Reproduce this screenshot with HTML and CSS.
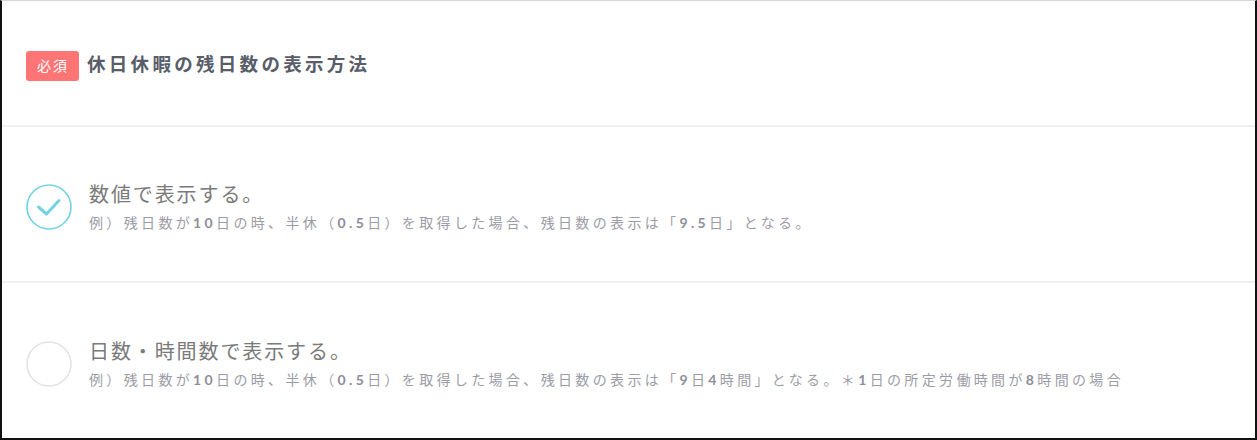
FILE: index.html
```html
<!DOCTYPE html>
<html lang="ja">
<head>
    <meta charset="UTF-8">
    <meta name="viewport" content="width=device-width, initial-scale=1.0">
    <title>休日休暇の残日数の表示方法</title>
    <link rel="stylesheet" href="styles.css">
</head>
<body>
    <div class="panel">
        <div class="panel-head">
            <span class="badge">必須</span>
            <h1 class="title">休日休暇の残日数の表示方法</h1>
        </div>
        <div class="option">
            <span class="radio checked">
                <svg width="46" height="46" viewBox="0 0 46 46">
                    <circle cx="23" cy="23" r="22" fill="none" stroke="#72d3e4" stroke-width="1.6"/>
                    <polyline points="12.5,23 20.5,30 33,16.5" fill="none" stroke="#72d3e4" stroke-width="3" stroke-linecap="round" stroke-linejoin="round"/>
                </svg>
            </span>
            <div class="option-text">
                <div class="option-label">数値で表示する。</div>
                <div class="option-note">例）残日数が<b>10</b>日の時、半休（<b>0.5</b>日）を取得した場合、残日数の表示は「<b>9.5</b>日」となる。</div>
            </div>
        </div>
        <div class="option">
            <span class="radio">
                <svg width="46" height="46" viewBox="0 0 46 46">
                    <circle cx="23" cy="23" r="22" fill="none" stroke="#e3e3e6" stroke-width="1.6"/>
                </svg>
            </span>
            <div class="option-text">
                <div class="option-label">日数・時間数で表示する。</div>
                <div class="option-note">例）残日数が<b>10</b>日の時、半休（<b>0.5</b>日）を取得した場合、残日数の表示は「<b>9</b>日<b>4</b>時間」となる。＊<b>1</b>日の所定労働時間が<b>8</b>時間の場合</div>
            </div>
        </div>
    </div>
</body>
</html>
```

FILE: styles.css
```css
body {
    margin: 0;
    font-family: Lato, "Noto Sans CJK JP", sans-serif;
    background: #fff;
}
.panel {
    box-sizing: border-box;
    width: 1257px;
    height: 440px;
    border-top: 1px solid #d6d6d6;
    border-left: 2px solid #111;
    border-right: 2px solid #111;
    border-bottom: 2px solid #111;
    background: #fff;
}
.panel-head {
    box-sizing: border-box;
    height: 126px;
    display: flex;
    align-items: center;
    padding: 0 0 0 24px;
    border-bottom: 2px solid #efefef;
}
.badge {
    background: #ff7474;
    color: #fff;
    font-size: 14px;
    letter-spacing: 2px;
    line-height: 30px;
    height: 30px;
    padding: 0 10px 0 11px;
    border-radius: 3px;
    margin-top: 6px;
}
.title {
    margin: 0 0 0 8px;
    font-size: 18.5px;
    font-weight: bold;
    letter-spacing: 3.3px;
    color: #585d69;
}
.option {
    box-sizing: border-box;
    height: 156px;
    display: flex;
    align-items: center;
    gap: 17px;
    padding: 6px 0 0 24px;
    border-bottom: 2px solid #efefef;
}
.option:last-child {
    border-bottom: none;
    height: 155px;
}
.radio {
    display: flex;
    width: 46px;
    height: 46px;
}
.option-text {
    display: flex;
    flex-direction: column;
    gap: 7px;
}
.option-label {
    font-size: 20px;
    letter-spacing: 1.9px;
    color: #7a7a7a;
    line-height: 25px;
}
.option-note {
    font-size: 14px;
    letter-spacing: 3.35px;
    color: #9c9ca6;
    line-height: 18px;
}
.option-note b {
    font-weight: bold;
    color: #8e8e99;
}
```
